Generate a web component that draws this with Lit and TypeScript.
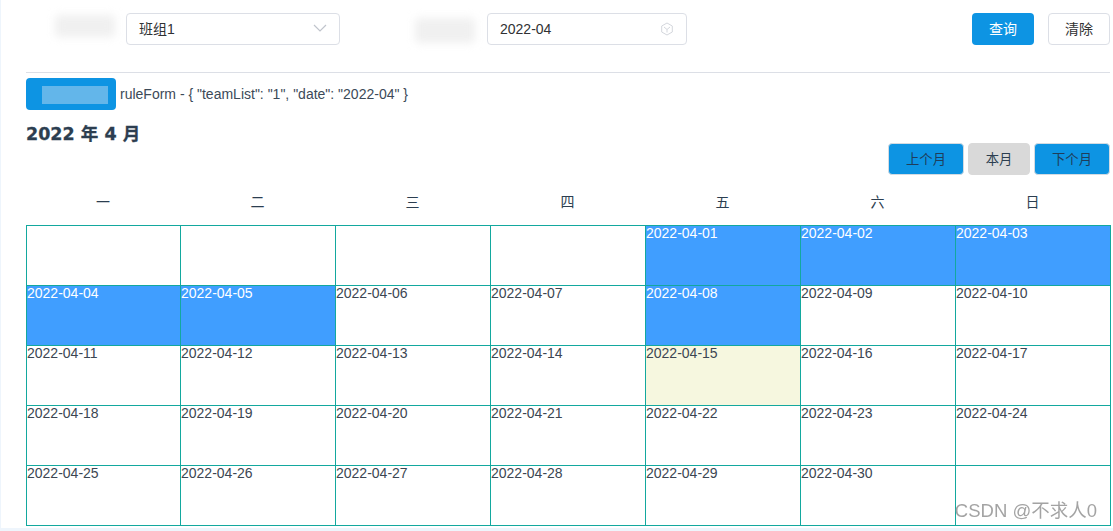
import { LitElement, html, css, svg } from "lit";
import { customElement } from "lit/decorators.js";

const blue = new Set([1, 2, 3, 4, 5, 8]);

@customElement("app-root")
export class AppRoot extends LitElement {
  static styles = css`
    :host {
      display: block;
      width: 1113px;
      height: 531px;
      overflow: hidden;
      background: #eef5fc;
      font-family: "Liberation Sans", "Noto Sans CJK SC", sans-serif;
      color: #2c3e50;
      font-size: 14px;
    }
    .page {
      position: relative;
      margin-left: 1px;
      height: 528px;
      background: #fff;
      padding: 13px 0 0 25px;
      box-sizing: border-box;
      overflow: hidden;
    }
    .form { display: flex; height: 32px; width: 1084px; }
    .blur-label { background: #f0f0f0; filter: blur(4px); border-radius: 4px; }
    .l1 { width: 60px; height: 22px; margin: 2px 11px 0 29px; }
    .l2 { width: 60px; height: 25px; margin: 5px 12px 0 75px; }
    .input {
      box-sizing: border-box;
      height: 32px;
      border: 1px solid #dcdfe6;
      border-radius: 4px;
      display: flex;
      align-items: center;
      justify-content: space-between;
      padding: 0 12px;
      color: #303133;
    }
    .select { width: 214px; padding-bottom: 2px; }
    .date { width: 200px; padding-bottom: 1px; }
    .spacer { flex: 1; }
    .btn {
      box-sizing: border-box;
      height: 32px;
      border-radius: 4px;
      display: flex;
      align-items: center;
      justify-content: center;
      font-size: 14px;
      padding-bottom: 3px;
    }
    .primary { background: #0d94e3; color: #fff; }
    .plain { border: 1px solid #dcdfe6; color: #303133; margin-left: 14px; }
    .w62 { width: 62px; }
    .rule { height: 1px; width: 1084px; background: #dcdfe6; margin-top: 27px; }
    .debug { display: flex; align-items: center; margin-top: 5px; height: 32px; gap: 4px; color: #3c4a58; font-size: 14px; }
    .debug-btn { box-sizing: border-box; width: 90px; height: 32px; background: #0d94e3; border-radius: 4px; padding: 8px 0 0 16px; }
    .debug-btn i { display: block; width: 66px; height: 18px; background: #63b6ea; }
    h2 {
      margin: 0;
      font-family: "DejaVu Sans", "Noto Sans CJK SC", sans-serif;
      font-size: 17.5px;
      line-height: 24px;
      font-weight: 700;
      -webkit-text-stroke: 0.3px #2c3e50;
      position: absolute;
      top: 122px;
      left: 25px;
    }
    .nav { display: flex; justify-content: flex-end; gap: 4px; width: 1084px; margin-top: 33px; }
    .nav .btn { color: #1f3d5a; border: 1px solid #d3dbe2; font-size: 13.33px; padding-bottom: 2px; }
    .w76 { width: 76px; }
    .nav .blue { background: #0d94e3; }
    .nav .gray { background: #d9d9d9; border-color: #d9d9d9; width: 62px; color: #2c3e50; }
    .week {
      display: grid;
      grid-template-columns: 154px repeat(6, 155px);
      height: 50px;
      align-items: center;
      text-align: center;
      font-size: 14px;
    }
    .week div { padding-top: 1px; }
    .grid {
      display: grid;
      grid-template-columns: 154px repeat(6, 155px);
      grid-auto-rows: 60px;
      width: 1085px;
      box-sizing: border-box;
      border-right: 1px solid #13a89e;
      border-bottom: 1px solid #13a89e;
    }
    .cell {
      border-left: 1px solid #13a89e;
      border-top: 1px solid #13a89e;
      color: #3c4652;
      line-height: 15px;
      overflow: hidden;
    }
    .cell.on { background: #409eff; color: #fff; }
    .cell.today { background: #f6f7df; }
    .mark {
      position: absolute;
      right: 16px;
      bottom: 5px;
      color: #9a9a9a;
      font-size: 18.5px;
      line-height: 24px;
      opacity: 0.9;
    }
  `;

  render() {
    const cells: (number | null)[] = [null, null, null, null];
    for (let d = 1; d <= 30; d++) cells.push(d);
    cells.push(null);
    return html`<div class="page">
      <div class="form">
        <div class="blur-label l1"></div>
        <div class="input select"><span>班组1</span>
          <svg width="14" height="14" viewBox="0 0 14 14" fill="none" stroke="#c0c4cc" stroke-width="1.2"><path d="M1 4l6 6 6-6"/></svg>
        </div>
        <div class="blur-label l2"></div>
        <div class="input date"><span>2022-04</span>
          <svg width="14" height="14" viewBox="0 0 14 14" fill="none" stroke="#d4d7dd" stroke-width="1">${svg`<path d="M7 1l5.3 3v6L7 13l-5.3-3V4z"/><path d="M4 5l3 2.500 3-2.500M7 7.500v3"/>`}</svg>
        </div>
        <div class="spacer"></div>
        <div class="btn primary w62">查询</div>
        <div class="btn plain w62">清除</div>
      </div>
      <div class="rule"></div>
      <div class="debug">
        <div class="debug-btn"><i></i></div>
        <span>ruleForm - { "teamList": "1", "date": "2022-04" }</span>
      </div>
      <h2>2022 年 4 月</h2>
      <div class="nav">
        <div class="btn blue w76">上个月</div>
        <div class="btn gray">本月</div>
        <div class="btn blue w76">下个月</div>
      </div>
      <div class="week">${["一","二","三","四","五","六","日"].map((w) => html`<div>${w}</div>`)}</div>
      <div class="grid">
        ${cells.map((d) => {
          const cls = d === null ? "cell" : blue.has(d) ? "cell on" : d === 15 ? "cell today" : "cell";
          const label = d === null ? "" : `2022-04-${String(d).padStart(2, "0")}`;
          return html`<div class=${cls}>${label}</div>`;
        })}
      </div>
      <div class="mark">CSDN @不求人0</div>
    </div>`;
  }
}
